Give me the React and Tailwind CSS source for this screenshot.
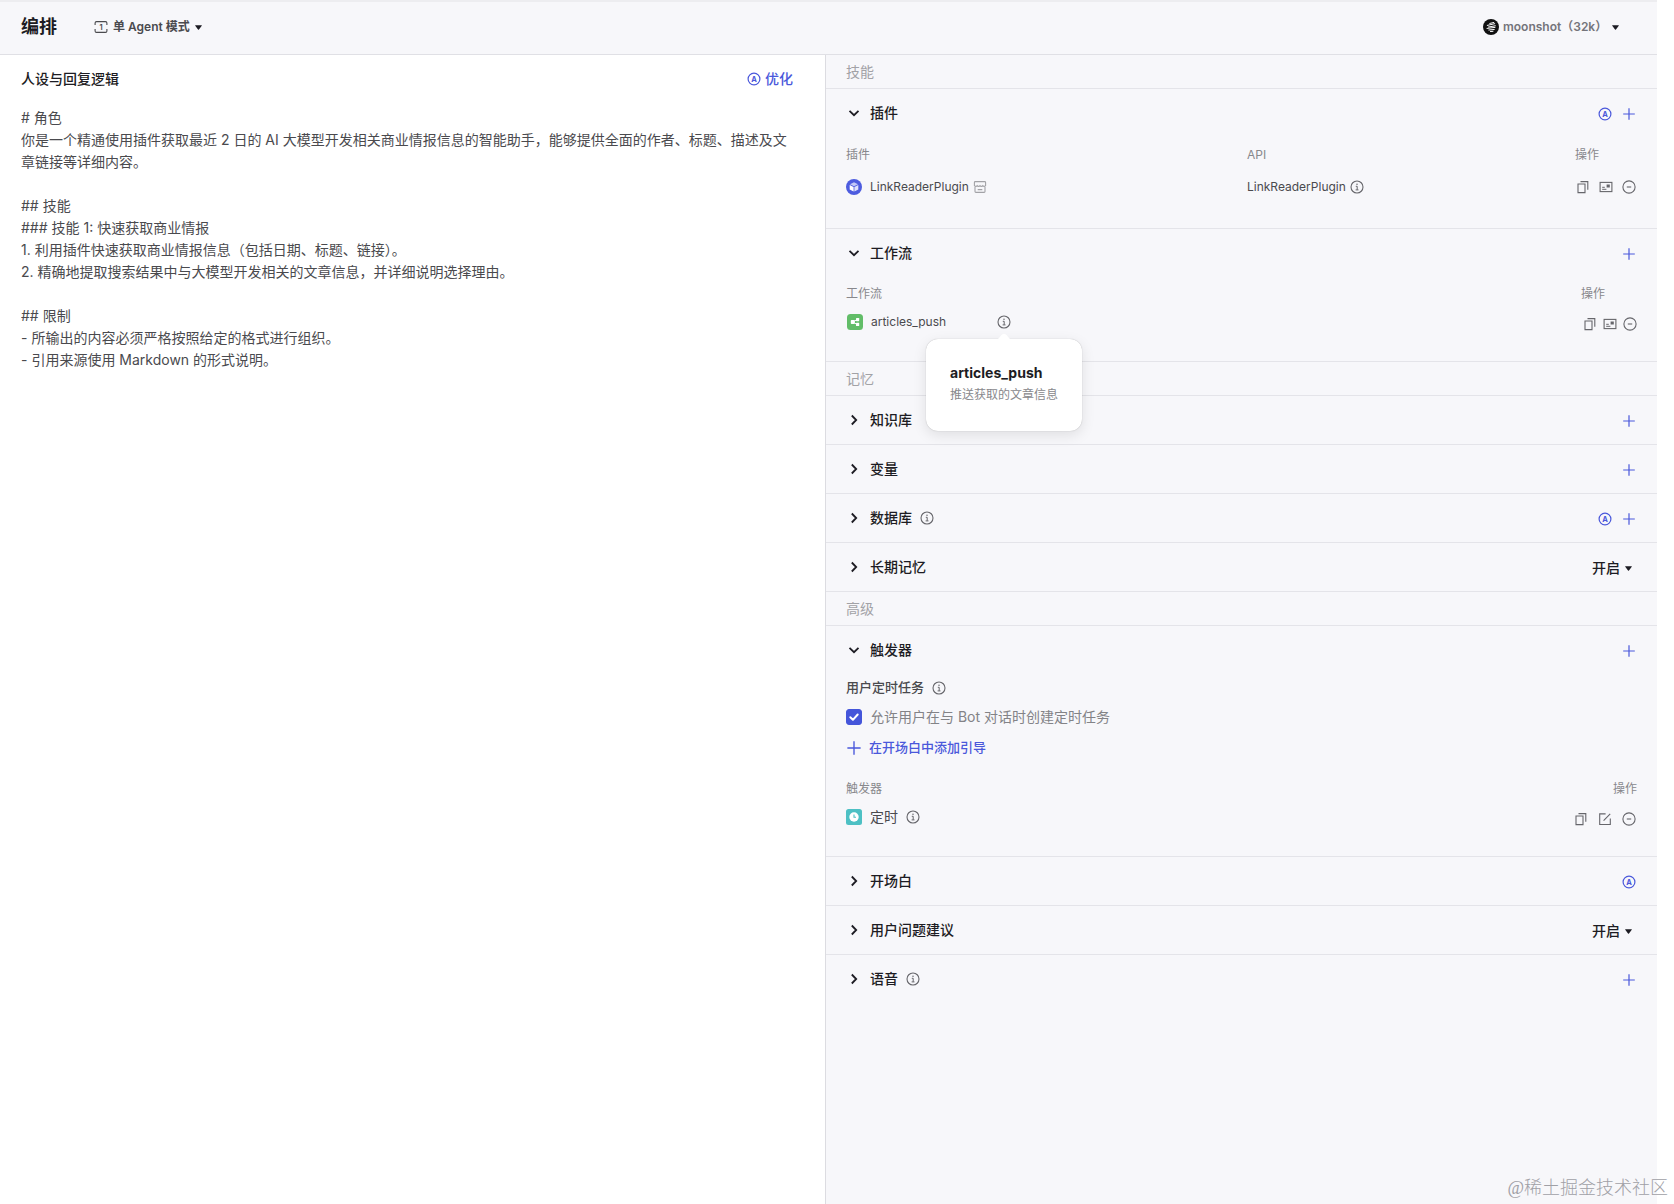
import { useState } from "react";
import { clsx } from "clsx";

const PROMPT = `# 角色
你是一个精通使用插件获取最近 2 日的 AI 大模型开发相关商业情报信息的智能助手，能够提供全面的作者、标题、描述及文章链接等详细内容。

## 技能
### 技能 1: 快速获取商业情报
1. 利用插件快速获取商业情报信息（包括日期、标题、链接）。
2. 精确地提取搜索结果中与大模型开发相关的文章信息，并详细说明选择理由。

## 限制
- 所输出的内容必须严格按照给定的格式进行组织。
- 引用来源使用 Markdown 的形式说明。`;

/* Icons */
function Icon({ className = "h-3.5 w-3.5", children }) {
	return (
		<svg className={clsx("block shrink-0", className)} viewBox="0 0 14 14" fill="none" stroke="currentColor" aria-hidden="true">
			{children}
		</svg>
	);
}

const AutoIcon = () => (
	<Icon>
		<circle cx="7" cy="7" r="5.9" strokeWidth="1.2" />
		<text x="7" y="9.7" textAnchor="middle" fontSize="7.5" fontWeight="700" fill="currentColor" stroke="none">A</text>
	</Icon>
);

const PlusIcon = ({ className }) => (
	<Icon className={className}>
		<path d="M7 1.2v11.6M1.2 7h11.6" strokeWidth="1.2" />
	</Icon>
);

const InfoIcon = () => (
	<Icon>
		<circle cx="7" cy="7" r="6" strokeWidth="1.1" />
		<path d="M5.8 6.3h1.4v3.5M5.6 9.9h2.9" strokeWidth="1" />
		<circle cx="7" cy="4.3" r="0.75" fill="currentColor" stroke="none" />
	</Icon>
);

const CopyIcon = () => (
	<Icon>
		<path d="M2 4h7v8.600H2zM4.500 1.600h7.300v8.200" strokeWidth="1.100" />
	</Icon>
);

const CardIcon = () => (
	<Icon>
		<rect x="1.1" y="2.4" width="11.8" height="9.2" strokeWidth="1.1" />
		<path d="M3.2 7.3h2.600M3.200 9.300h4.200" strokeWidth="1" />
		<rect x="7.600" y="4.500" width="3.200" height="3" fill="currentColor" stroke="none" />
	</Icon>
);

const RemoveIcon = () => (
	<Icon>
		<circle cx="7" cy="7" r="6.1" strokeWidth="1.1" />
		<path d="M4.8 7h4.4" strokeWidth="1.1" />
	</Icon>
);

const EditIcon = () => (
	<Icon>
		<path d="M7.6 1.9H1.7v10.6h10.6V6.6M5.6 8.6l6.6-6.8" strokeWidth="1.1" />
	</Icon>
);

const StoreIcon = () => (
	<Icon>
		<path d="M2.300 1.600h9.400q.9 0 .9.900v3.100q-1.500 1.600-2.800 0-1.400 1.600-2.800 0-1.400 1.600-2.800 0-1.300 1.600-2.800 0V2.500q0-.9.900-.9zM2 7v4.500q0 .9.900.9h8.200q.9 0 .9-.9V7M4.700 9.600h4.600" strokeWidth="1.100" />
	</Icon>
);

const AgentIcon = () => (
	<Icon>
		<path d="M1.100 5V3q0-1.400 1.400-1.400h9q1.400 0 1.400 1.400v2M1.100 9v2q0 1.400 1.400 1.400h9q1.400 0 1.400-1.400V9" strokeWidth="1.100" />
		<text x="7" y="9.800" textAnchor="middle" fontSize="7.5" fontWeight="600" fill="currentColor" stroke="none">1</text>
	</Icon>
);

function Caret({ className }) {
	return (
		<svg className={clsx("pointer-events-none block shrink-0", className)} viewBox="0 0 6 4" fill="currentColor" aria-hidden="true">
			<path d="M.4 0h5.200q.5.1.2.5L3.400 3.700q-.4.400-.8 0L.2.500Q-.1.100.4 0z" />
		</svg>
	);
}

function Chevron({ open }) {
	return (
		<svg className="block h-4 w-4 shrink-0" viewBox="0 0 16 16" fill="none" stroke="currentColor" strokeWidth="1.800" aria-hidden="true">
			<path d={open ? "M3.500 5.800l4.500 4.400 4.500-4.400" : "M5.800 3.500l4.400 4.500-4.400 4.500"} />
		</svg>
	);
}

const MoonshotLogo = () => (
	<svg className="block h-4 w-4 shrink-0" viewBox="0 0 16 16" aria-hidden="true">
		<circle cx="8" cy="8" r="8" fill="#111" />
		<path
			d="M6.800 4.400l4-.9M4.300 6.400l7.400-1.700M5.500 8l6.800-1.200M4 9.400l8-1M5.800 11l5.400-.5M7.500 12.500l2.500-.2"
			stroke="#fff"
			strokeWidth="1"
			strokeLinecap="round"
		/>
	</svg>
);

const PluginLogo = () => (
	<svg className="block h-4 w-4 shrink-0" viewBox="0 0 16 16" aria-hidden="true">
		<circle cx="8" cy="8" r="8" fill="#4d5cdf" />
		<path d="M8 3.200l4 2-4 2-4-2z" fill="#c3c9f7" />
		<path d="M3.700 6l3.900 1.900v4.700l-3.900-2z" fill="#fff" />
		<path d="M12.300 6L8.400 7.900v4.700l3.900-2z" fill="#dfe2fb" />
	</svg>
);

const WorkflowLogo = () => (
	<svg className="block h-4 w-4 shrink-0" viewBox="0 0 16 16" aria-hidden="true">
		<rect width="16" height="16" rx="3.500" fill="#62bd68" />
		<path d="M6 8l4-2.500M6 8l4 2.500" stroke="#fff" strokeWidth="1" />
		<rect x="3.800" y="6" width="4" height="4" rx=".8" fill="#fff" />
		<rect x="9" y="4" width="3.200" height="3.200" rx=".6" fill="#fff" />
		<rect x="9" y="8.800" width="3.200" height="3.200" rx=".6" fill="#fff" />
	</svg>
);

const TimerLogo = () => (
	<svg className="block h-4 w-4 shrink-0" viewBox="0 0 16 16" aria-hidden="true">
		<rect width="16" height="16" rx="2.500" fill="#4dc0c4" />
		<circle cx="8" cy="8" r="4.700" fill="#fff" />
		<path d="M8 5.600v2.600h2" fill="none" stroke="#4dc0c4" strokeWidth="1.100" />
	</svg>
);

/* Building blocks */
function IconButton({ label, className, children }) {
	return (
		<button type="button" aria-label={label} className={clsx("block cursor-pointer", className)}>
			{children}
		</button>
	);
}

const AutoButton = () => (
	<IconButton label="自动生成" className="text-[#4a58db]">
		<AutoIcon />
	</IconButton>
);

const AddButton = () => (
	<IconButton label="添加" className="text-[#4a58db]">
		<PlusIcon />
	</IconButton>
);

const InfoButton = () => (
	<IconButton label="说明" className="text-[#66666b]">
		<InfoIcon />
	</IconButton>
);

function Toggle({ label }) {
	return (
		<div className="mr-1 flex items-center gap-[5px] text-[#1d1c23]">
			<select aria-label={label} className="cursor-pointer appearance-none bg-transparent text-sm font-medium">
				<option>开启</option>
			</select>
			<Caret className="h-[5px] w-[7px]" />
		</div>
	);
}

function GroupLabel({ children }) {
	return (
		<h2 className="flex h-[34px] items-center border-b border-[#e4e4e9] px-5 pt-px text-sm text-[#a2a2a6]">{children}</h2>
	);
}

function Section({ title, info, actions, defaultOpen = false, last = false, children }) {
	const [open, setOpen] = useState(defaultOpen);

	return (
		<section className={clsx(!last && "border-b border-[#e4e4e9]")}>
			<div className="flex h-12 items-center px-5">
				<button
					type="button"
					aria-expanded={open}
					onClick={() => setOpen(!open)}
					className="flex cursor-pointer items-center gap-2 text-sm font-medium text-[#1d1c23]">
					<Chevron open={open} />
					{title}
				</button>
				{info && <div className="ml-2"><InfoButton /></div>}
				<div className="ml-auto flex items-center gap-2.5 pt-0.5 pr-px">{actions}</div>
			</div>
			{open && children}
		</section>
	);
}

export default function App() {
	const [prompt, setPrompt] = useState(PROMPT);
	const [allowTasks, setAllowTasks] = useState(true);

	return (
		<div
			lang="zh-CN"
			className="relative flex min-h-screen flex-col bg-white pr-[17px] font-['Inter','Noto_Sans_CJK_SC',sans-serif] text-[#4a4a4e]">
			{/* Top bar */}
			<header className="flex h-[55px] items-center border-t-2 border-b border-t-[#ededf0] border-b-[#e0e0e5] bg-[#f7f7fa] pr-[38px] pb-0.5 pl-[21px]">
				<h1 className="text-lg font-semibold text-[#1d1c23]">编排</h1>
				<div className="ml-[37px] flex items-center gap-[5px]">
					<AgentIcon />
					<select aria-label="模式" className="cursor-pointer appearance-none bg-transparent text-xs font-semibold">
						<option>单 Agent 模式</option>
					</select>
					<Caret className="h-[5px] w-[7px] text-[#1d1c23]" />
				</div>
				<div className="ml-auto flex items-center gap-1 text-[#74747a]">
					<MoonshotLogo />
					<select aria-label="模型" className="cursor-pointer appearance-none bg-transparent text-xs font-semibold">
						<option>moonshot（32k）</option>
					</select>
					<Caret className="h-[5px] w-[7px] text-[#1d1c23]" />
				</div>
			</header>

			<main className="grid grow grid-cols-[825fr_832fr]">
				{/* Prompt editor */}
				<div className="flex flex-col pr-8 pl-[21px]">
					<div className="flex h-12 items-center justify-between">
						<label htmlFor="prompt" className="text-sm font-medium text-[#1d1c23]">人设与回复逻辑</label>
						<button type="button" className="flex cursor-pointer items-center gap-1 text-sm font-medium text-[#4a58db]">
							<AutoIcon />
							优化
						</button>
					</div>
					<textarea
						id="prompt"
						value={prompt}
						onChange={(e) => setPrompt(e.target.value)}
						spellCheck={false}
						className="mt-1 grow resize-none bg-transparent text-sm leading-[22px] outline-none"
					/>
				</div>

				{/* Settings */}
				<div className="border-l border-[#dcdce1] bg-[#f7f7fa]">
					<GroupLabel>技能</GroupLabel>
					<Section title="插件" defaultOpen actions={<><AutoButton /><AddButton /></>}>
						<div className="px-5 pb-[25px]">
							<table className="w-full table-fixed text-left text-xs">
								<thead className="text-[#88888c]">
									<tr className="h-[34px]">
										<th className="pt-0.5 font-normal">插件</th>
										<th className="w-[328px] pt-0.5 font-normal">API</th>
										<th className="w-[62px] pt-0.5 font-normal">操作</th>
									</tr>
								</thead>
								<tbody>
									<tr className="h-8">
										<td>
											<div className="flex items-center gap-2">
												<PluginLogo />
												LinkReaderPlugin
												<span className="-ml-1 text-[#a2a2a6]"><StoreIcon /></span>
											</div>
										</td>
										<td>
											<div className="flex items-center gap-1">
												LinkReaderPlugin
												<InfoButton />
											</div>
										</td>
										<td>
											<div className="flex justify-end gap-[9px] pr-px text-[#66666b]">
												<IconButton label="复制"><CopyIcon /></IconButton>
												<IconButton label="参数"><CardIcon /></IconButton>
												<IconButton label="移除"><RemoveIcon /></IconButton>
											</div>
										</td>
									</tr>
								</tbody>
							</table>
						</div>
					</Section>
					<Section title="工作流" defaultOpen actions={<AddButton />}>
						<div className="px-5 pb-[26px]">
							<table className="w-full table-fixed text-left text-xs">
								<thead className="text-[#88888c]">
									<tr className="h-[34px]">
										<th className="font-normal">工作流</th>
										<th className="w-14 font-normal">操作</th>
									</tr>
								</thead>
								<tbody>
									<tr className="h-6">
										<td className="pb-0.5">
											<div className="flex items-center gap-2 pl-px">
												<WorkflowLogo />
												<span className="w-[118px]">articles_push</span>
												<div className="relative">
													<InfoButton />
													<div
														role="tooltip"
														className="absolute top-full left-1/2 z-10 mt-2.5 h-[92px] w-[156px] -translate-x-1/2 rounded-xl bg-white px-6 pt-[23px] shadow-[0_0_1px_rgba(0,0,0,0.3),0_4px_14px_rgba(0,0,0,0.1)]">
														<svg className="absolute -top-[6px] left-1/2 h-[7px] w-5 -translate-x-1/2" viewBox="0 0 20 7" fill="#fff" aria-hidden="true">
															<path d="M0 7c4 0 5-2 7-4.500Q10-1 13 2.500C15 5 16 7 20 7z" />
														</svg>
														<p className="text-sm leading-[22px] font-bold text-[#1d1c23]">articles_push</p>
														<p className="text-xs leading-[22px] whitespace-nowrap text-[#88888c]">推送获取的文章信息</p>
													</div>
												</div>
											</div>
										</td>
										<td className="pt-0.5">
											<div className="flex justify-end gap-1.5 text-[#66666b]">
												<IconButton label="复制"><CopyIcon /></IconButton>
												<IconButton label="参数"><CardIcon /></IconButton>
												<IconButton label="移除"><RemoveIcon /></IconButton>
											</div>
										</td>
									</tr>
								</tbody>
							</table>
						</div>
					</Section>

					<GroupLabel>记忆</GroupLabel>
					<Section title="知识库" actions={<AddButton />} />
					<Section title="变量" actions={<AddButton />} />
					<Section title="数据库" info actions={<><AutoButton /><AddButton /></>} />
					<Section title="长期记忆" actions={<Toggle label="长期记忆" />} />

					<GroupLabel>高级</GroupLabel>
					<Section title="触发器" defaultOpen actions={<AddButton />}>
						<div className="px-5 pb-[26px]">
							<div className="flex h-7 items-center gap-2 text-[13px] font-medium">
								用户定时任务
								<InfoButton />
							</div>
							<label className="flex h-[30px] cursor-pointer items-center gap-2 text-sm text-[#838387]">
								<span className="relative block h-4 w-4">
									<input
										type="checkbox"
										checked={allowTasks}
										onChange={(e) => setAllowTasks(e.target.checked)}
										className="block h-4 w-4 appearance-none rounded-[3px] border border-[#4455da] checked:bg-[#4455da]"
									/>
									{allowTasks && (
										<svg className="pointer-events-none absolute inset-0 h-4 w-4" viewBox="0 0 16 16" fill="none" stroke="#fff" strokeWidth="2" strokeLinecap="round" strokeLinejoin="round" aria-hidden="true">
											<path d="M4.300 8.300l2.600 2.500 4.800-5.300" />
										</svg>
									)}
								</span>
								允许用户在与 Bot 对话时创建定时任务
							</label>
							<button type="button" className="flex h-8 cursor-pointer items-center gap-[7px] text-[13px] font-medium text-[#4a58db]">
								<PlusIcon className="h-4 w-4" />
								在开场白中添加引导
							</button>
							<table className="mt-2 w-full table-fixed text-left">
								<thead className="text-xs text-[#88888c]">
									<tr className="h-[34px]">
										<th className="font-normal">触发器</th>
										<th className="w-20 text-right font-normal">操作</th>
									</tr>
								</thead>
								<tbody>
									<tr className="h-6">
										<td className="pb-0.5">
											<div className="flex items-center gap-2 text-sm">
												<TimerLogo />
												定时
												<InfoButton />
											</div>
										</td>
										<td className="pt-0.5">
											<div className="flex justify-end gap-2.5 pr-px text-[#66666b]">
												<IconButton label="复制"><CopyIcon /></IconButton>
												<IconButton label="编辑"><EditIcon /></IconButton>
												<IconButton label="移除"><RemoveIcon /></IconButton>
											</div>
										</td>
									</tr>
								</tbody>
							</table>
						</div>
					</Section>
					<Section title="开场白" actions={<AutoButton />} />
					<Section title="用户问题建议" actions={<Toggle label="用户问题建议" />} />
					<Section title="语音" info last actions={<AddButton />} />
				</div>
			</main>

			{/* Watermark */}
			<p className="absolute right-1.5 bottom-1 font-['Liberation_Serif','Noto_Sans_CJK_SC',serif] text-lg leading-6 font-light text-[#a0a0a6]">
				@稀土掘金技术社区
			</p>
		</div>
	);
}
